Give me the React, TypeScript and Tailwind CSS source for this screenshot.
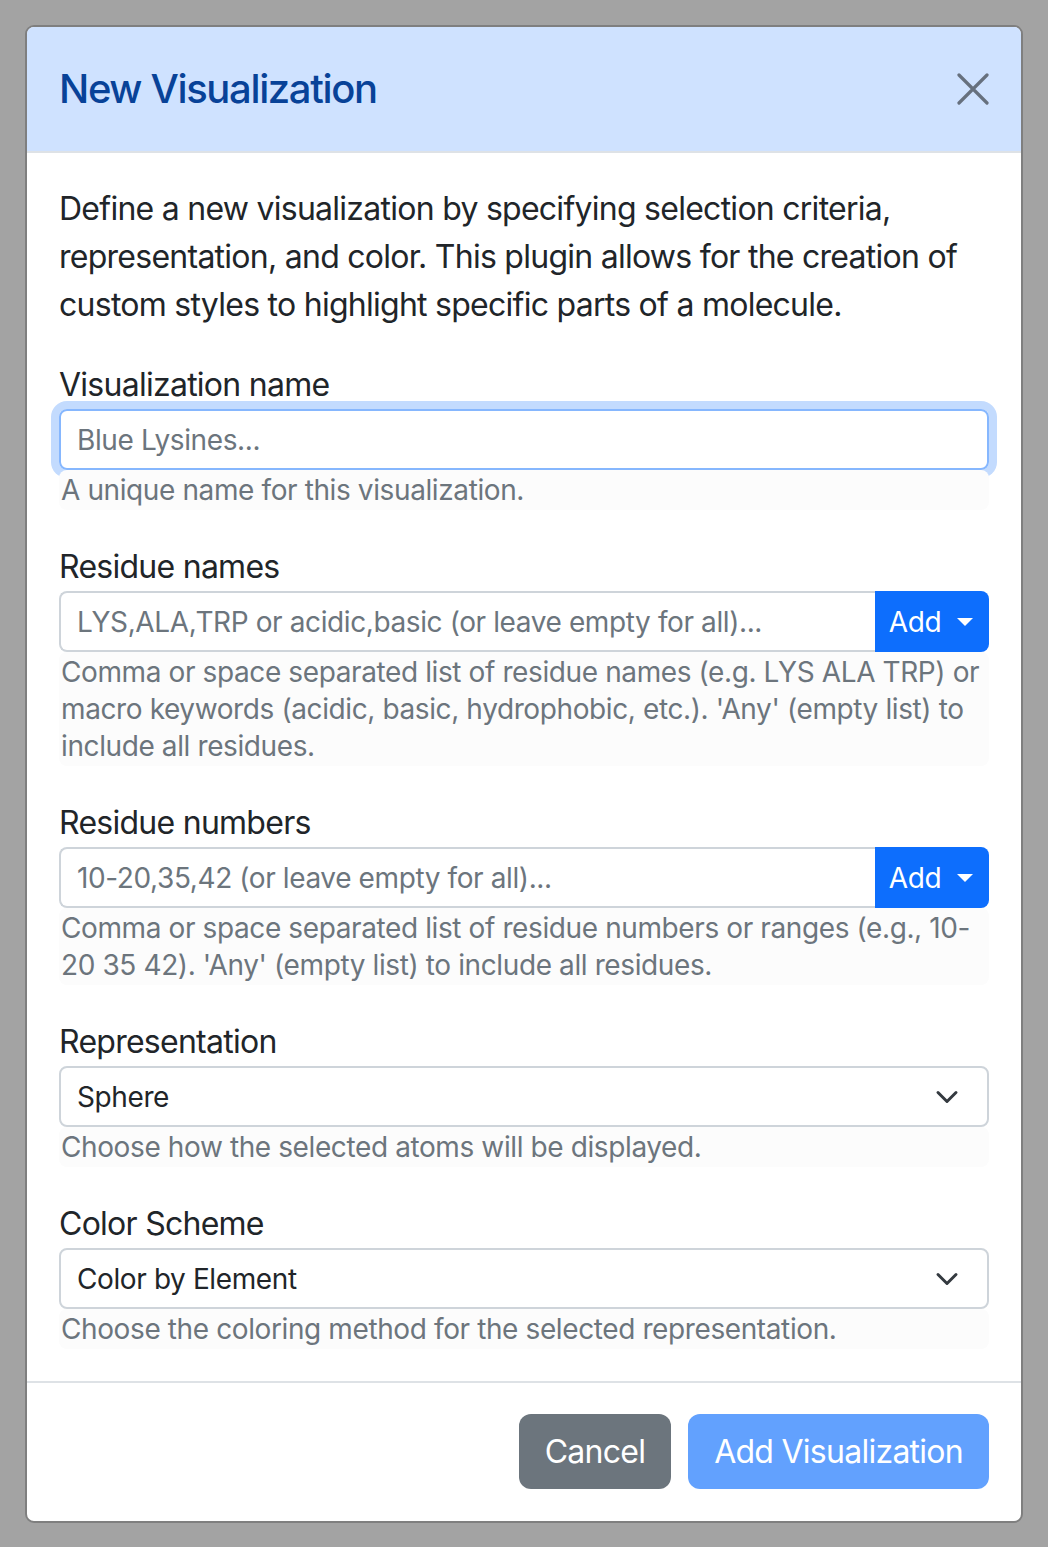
import React from "react";

const font = { fontFamily: "Inter, 'Noto Sans', 'Liberation Sans', sans-serif" };

function Help({ children }: { children: React.ReactNode }) {
  return (
    <div className="rounded-[8px] bg-[#fcfcfc] px-[2px] pb-[1px] pt-[2px] text-[28px] leading-[37px] tracking-[-0.014em] text-[#6c757d]">
      {children}
    </div>
  );
}

function Label({ children }: { children: React.ReactNode }) {
  return <div className="h-[48px] text-[32px] leading-[48px] tracking-[-0.023em] text-[#212529]">{children}</div>;
}

function Caret() {
  return (
    <svg width="20" height="12" viewBox="0 0 20 12" className="ml-[14px]">
      <path d="M2 2 L10 10 L18 2 Z" fill="#ffffff" />
    </svg>
  );
}

function InputGroup({ placeholder }: { placeholder: string }) {
  return (
    <div className="flex h-[61px]">
      <div className="flex flex-1 items-center rounded-l-[8px] border-2 border-r-0 border-[#ced4da] bg-white pl-[16px] text-[28px] tracking-[-0.014em] text-[#6c757d]">
        {placeholder}
      </div>
      <div className="flex w-[114px] items-center justify-center rounded-r-[8px] bg-[#0d6efd] text-[28px] tracking-[-0.014em] text-white">
        <span>Add</span>
        <Caret />
      </div>
    </div>
  );
}

function Chevron() {
  return (
    <svg width="24" height="24" viewBox="0 0 16 16">
      <path d="m2 5 6 6 6-6" fill="none" stroke="#343a40" strokeWidth="2" strokeLinecap="round" strokeLinejoin="round" />
    </svg>
  );
}

function Select({ value }: { value: string }) {
  return (
    <div className="flex h-[61px] items-center justify-between rounded-[8px] border-2 border-[#ced4da] bg-white pl-[16px] pr-[28px] text-[28px] tracking-[-0.014em] text-[#212529]">
      <span>{value}</span>
      <Chevron />
    </div>
  );
}

export default function App() {
  return (
    <div className="min-h-[1547px] w-[1048px] bg-[#a3a3a3] pl-[25px] pt-[25px]" style={font}>
      <div className="w-[998px] overflow-hidden rounded-[9px] border-2 border-[#7f7f7f] bg-white">
        {/* Header */}
        <div className="flex h-[126px] items-center justify-between border-b-2 border-[#dee2e6] bg-[#cfe2ff] pl-[32px] pr-[32px]">
          <h5 className="text-[40px] leading-[60px] font-medium tracking-[-0.034em] text-[#084298]">New Visualization</h5>
          <svg width="32" height="32" viewBox="0 0 32 32" className="opacity-50">
            <path d="M2 2 L30 30 M30 2 L2 30" stroke="#000" strokeWidth="3.2" strokeLinecap="round" />
          </svg>
        </div>

        {/* Body */}
        <div className="px-[32px] pt-[32px]">
          <p className="mb-[32px] text-[32px] leading-[48px] tracking-[-0.023em] text-[#212529]">
            Define a new visualization by specifying selection criteria, representation, and color. This plugin allows for the creation of custom styles to highlight specific parts of a molecule.
          </p>

          <div className="mb-[33px]">
            <Label>Visualization name</Label>
            <div className="rounded-[8px] shadow-[0_0_0_8px_#c3dbfe]">
              <div className="flex h-[61px] items-center rounded-[8px] border-2 border-[#86b7fe] bg-white pl-[16px] text-[28px] tracking-[-0.014em] text-[#6c757d]">
                Blue Lysines...
              </div>
            </div>
            <Help>A unique name for this visualization.</Help>
          </div>

          <div className="mb-[33px]">
            <Label>Residue names</Label>
            <InputGroup placeholder="LYS,ALA,TRP or acidic,basic (or leave empty for all)..." />
            <Help>
              Comma or space separated list of residue names (e.g. LYS ALA TRP) or macro keywords (acidic, basic, hydrophobic, etc.). 'Any' (empty list) to include all residues.
            </Help>
          </div>

          <div className="mb-[33px]">
            <Label>Residue numbers</Label>
            <InputGroup placeholder="10-20,35,42 (or leave empty for all)..." />
            <Help>
              Comma or space separated list of residue numbers or ranges (e.g., 10-20 35 42). 'Any' (empty list) to include all residues.
            </Help>
          </div>

          <div className="mb-[33px]">
            <Label>Representation</Label>
            <Select value="Sphere" />
            <Help>Choose how the selected atoms will be displayed.</Help>
          </div>

          <div className="mb-[32px]">
            <Label>Color Scheme</Label>
            <Select value="Color by Element" />
            <Help>Choose the coloring method for the selected representation.</Help>
          </div>
        </div>

        {/* Footer */}
        <div className="flex items-center justify-end gap-[17px] border-t-2 border-[#dee2e6] px-[32px] pb-[32px] pt-[31px]">
          <button className="h-[75px] rounded-[12px] bg-[#6c757d] px-[26px] text-[32px] tracking-[-0.023em] text-white">Cancel</button>
          <button className="h-[75px] rounded-[12px] bg-[#62a1fe] px-[26px] text-[32px] tracking-[-0.023em] text-white">Add Visualization</button>
        </div>
      </div>
    </div>
  );
}
